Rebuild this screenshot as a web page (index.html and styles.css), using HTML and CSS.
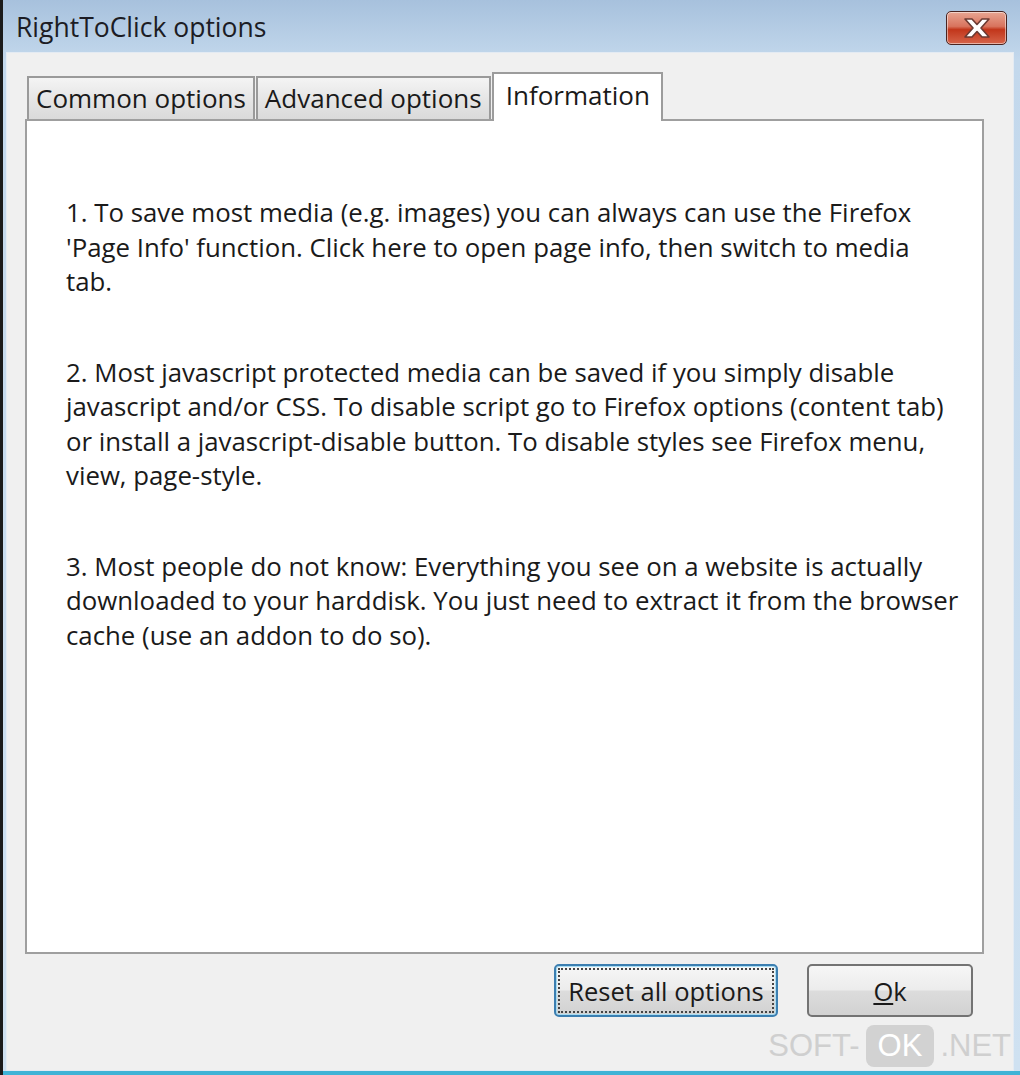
FILE: index.html
```html
<!DOCTYPE html>
<html lang="en">
<head>
    <meta charset="UTF-8">
    <title>RightToClick options</title>
    <link rel="stylesheet" href="styles.css">
</head>
<body>
    <div class="window">
        <div class="titlebar">
            <span class="title">RightToClick options</span>
            <button class="close-btn" aria-label="Close">
                <svg width="30" height="22" viewBox="0 0 30 22">
                    <path d="M3 2 L10 2 L15 7.5 L20 2 L27 2 L19 11 L27 20 L20 20 L15 14.5 L10 20 L3 20 L11 11 Z" fill="#fff" stroke="#6b3a32" stroke-width="1.6" stroke-linejoin="round"/>
                </svg>
            </button>
        </div>
        <div class="client">
            <div class="tabs">
                <div class="tab">Common options</div>
                <div class="tab">Advanced options</div>
                <div class="tab active">Information</div>
            </div>
            <div class="panel">
                <p>1. To save most media (e.g. images) you can always can use the Firefox<br>
                'Page Info' function. Click here to open page info, then switch to media<br>
                tab.</p>
                <p>2. Most javascript protected media can be saved if you simply disable<br>
                javascript and/or CSS. To disable script go to Firefox options (content tab)<br>
                or install a javascript-disable button. To disable styles see Firefox menu,<br>
                view, page-style.</p>
                <p>3. Most people do not know: Everything you see on a website is actually<br>
                downloaded to your harddisk. You just need to extract it from the browser<br>
                cache (use an addon to do so).</p>
            </div>
            <div class="actions">
                <button class="btn focused"><span>Reset all options</span></button>
                <button class="btn"><span><u>O</u>k</span></button>
            </div>
            <div class="watermark">SOFT-<span class="ok">OK</span>.NET</div>
        </div>
    </div>
</body>
</html>
```

FILE: styles.css
```css
body {
    margin: 0;
    background: #1b1b1b;
    font-family: 'Open Sans', 'Noto Sans', sans-serif;
    color: #1a1a1a;
}
.window {
    height: 1071px;
    width: 1008px;
    margin-left: 3px;
    background: linear-gradient(#a7c1dd, #c3d8ec 60px, #cfe1f1);
    border-bottom: 4px solid #3fb3d6;
    display: flex;
    flex-direction: column;
    padding: 0 6px 0 3px;
}
.titlebar {
    height: 52px;
    display: flex;
    align-items: flex-start;
    justify-content: space-between;
    padding-left: 10px;
}
.title {
    font-size: 26.5px;
    line-height: 30px;
    margin-top: 12px;
    color: #1c1c24;
}
.close-btn {
    width: 61px;
    height: 34px;
    margin-top: 11px;
    margin-right: 7px;
    border: 1px solid #4a2420;
    border-radius: 5px;
    background: linear-gradient(#e8a592, #d8735d 45%, #c2361b 55%, #d6644a);
    box-shadow: inset 0 0 0 1px rgba(255,255,255,0.5);
    display: flex;
    align-items: center;
    justify-content: center;
    padding: 0;
}
.client {
    flex: 1;
    position: relative;
    background: #f0f0f0;
    border: 1px solid #e4ebf3;
    padding: 17px 29px 0 18px;
}
.tabs {
    display: flex;
    align-items: flex-end;
    height: 49px;
    padding-left: 2px;
}
.tab {
    height: 43px;
    line-height: 41px;
    padding: 0 7px;
    font-size: 26px;
    background: linear-gradient(#f4f4f4, #e6e6e6 50%, #dadada);
    border: 2px solid #9a9a9a;
    border-bottom: none;
    margin-right: 1px;
    box-sizing: border-box;
}
.tab.active {
    height: 49px;
    background: #fff;
    line-height: 42px;
    padding: 0 11px 0 12px;
    margin-left: 0;
    margin-bottom: -2px;
    position: relative;
    border-color: #9c9c9c;
}
.panel {
    height: 835px;
    box-sizing: border-box;
    background: #fff;
    border: 2px solid #9f9f9f;
    padding: 74px 20px 0 39px;
    font-size: 25.8px;
    line-height: 34.5px;
}
.panel p {
    margin: 0 0 56px;
    white-space: nowrap;
}
.actions {
    display: flex;
    justify-content: flex-end;
    gap: 29px;
    margin-top: 10px;
    padding-right: 11px;
}
.btn {
    height: 53px;
    border: 2px solid #737373;
    border-radius: 5px;
    background: linear-gradient(#f6f6f6, #ececec 48%, #dcdcdc 52%, #d2d2d2);
    font-family: inherit;
    font-size: 25.5px;
    color: #1a1a1a;
    padding: 3px;
    width: 166px;
}
.btn span {
    display: flex;
    align-items: center;
    justify-content: center;
    height: 100%;
}
.btn.focused {
    width: 224px;
    border-color: #3c7fb1;
    box-shadow: inset 0 0 0 1px #a8dcf2;
}
.btn.focused span {
    outline: 2px dotted #444;
    outline-offset: -1px;
}
.watermark {
    position: absolute;
    right: 2px;
    bottom: 3px;
    font-family: 'Liberation Sans', Arial, sans-serif;
    font-size: 31px;
    color: #cfcfcf;
    display: flex;
    align-items: center;
}
.watermark .ok {
    background: #d2d2d2;
    color: #fff;
    border-radius: 8px;
    padding: 3px 12px;
    margin: 0 6px;
}
```
